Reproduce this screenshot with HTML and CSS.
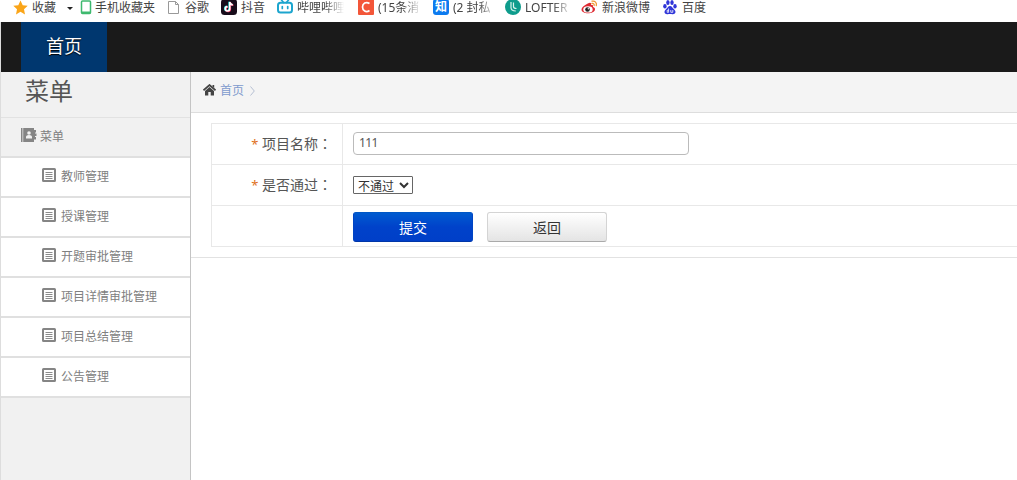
FILE: index.html
```
<!DOCTYPE html>
<html lang="zh-CN">

<head>
    <meta charset="UTF-8">
    <title>首页</title>
    <link rel="stylesheet" href="styles.css">
</head>

<body>
<svg class="defs" width="0" height="0">
    <symbol id="list" viewBox="0 0 14 14">
        <rect x="1" y="1" width="12" height="12" rx="0.5" fill="none" stroke="#858585" stroke-width="2"/>
        <path d="M3.500 4.500h7M3.500 6.500h7M3.500 8.500h7M3.500 10.500h7" stroke="#8c8c8c"/>
    </symbol>
</svg>

<div class="bookmarks">
    <div class="mark">
        <svg width="15" height="15" viewBox="0 0 15 15"><path d="M7.5 .5l2.2 4.7 5 .6-3.700 3.500 1 5.100-4.500-2.600L3 14.400l1-5.100L.3 5.800l5-.6z" fill="#faa519"/></svg>
        <span>收藏</span>
        <i class="caret"></i>
    </div>
    <div class="mark phone">
        <svg width="12" height="15" viewBox="0 0 12 15"><rect x="1.500" y="1" width="9" height="12.500" rx="1" fill="#fff" stroke="#3fb96f" stroke-width="1.500"/><path d="M2 11.500h8.500v2H2z" fill="#3fb96f"/></svg>
        <span>手机收藏夹</span>
    </div>
    <div class="mark">
        <svg width="14" height="15" viewBox="0 0 14 15"><path d="M1.500 1.500h7l3 3v9h-10zM8.500 1.500v3h3" fill="#fff" stroke="#999"/></svg>
        <span>谷歌</span>
    </div>
    <div class="mark">
        <svg width="16" height="16" viewBox="0 0 16 16"><rect width="16" height="16" rx="3.500" fill="#170b1a"/><path d="M8.700 3v6.800a2.200 2.200 0 1 1-2.200-2.200M8.700 3c.3 1.800 1.500 2.700 3.100 2.800" fill="none" stroke="#25d9d5" stroke-width="1.600" transform="translate(-.6 -.3)"/><path d="M8.700 3v6.800a2.200 2.200 0 1 1-2.200-2.200M8.700 3c.3 1.800 1.500 2.700 3.100 2.800" fill="none" stroke="#f33664" stroke-width="1.600" transform="translate(.6 .4)"/><path d="M8.700 3v6.800a2.200 2.200 0 1 1-2.200-2.200M8.700 3c.3 1.800 1.500 2.700 3.100 2.800" fill="none" stroke="#fff" stroke-width="1.600"/></svg>
        <span>抖音</span>
    </div>
    <div class="mark">
        <svg width="16" height="16" viewBox="0 0 16 16"><path d="M4.500 1l2 2.500M11.500 1l-2 2.500M5.300 7.500v2M10.700 7.500v2" stroke="#1ca5ce" stroke-width="1.700" stroke-linecap="round"/><rect x="1" y="3.800" width="14" height="9.700" rx="2.500" fill="none" stroke="#1ca5ce" stroke-width="2"/></svg>
        <span class="fade">哔哩哔哩</span>
    </div>
    <div class="mark">
        <svg width="16" height="16" viewBox="0 0 16 16"><rect width="16" height="16" rx="1" fill="#f35639"/><path d="M11.500 4.500C8 2.200 4.500 4.500 4.500 8s3.500 6 7 3.500" fill="none" stroke="#fff" stroke-width="1.700"/></svg>
        <span class="fade narrow">(15条消</span>
    </div>
    <div class="mark">
        <b class="zhi">知</b>
        <span class="fade narrow">(2 封私</span>
    </div>
    <div class="mark">
        <svg width="16" height="16" viewBox="0 0 16 16"><circle cx="8" cy="8" r="8" fill="#0e9c8c"/><path d="M6 3v5.500c0 2.500 1.500 3.500 4.800 3.500M8.500 3.500v4c0 1.500.8 2 3 2" fill="none" stroke="#d8f3ec" stroke-width="1.200"/></svg>
        <span class="fade">LOFTER</span>
    </div>
    <div class="mark">
        <svg width="17" height="16" viewBox="0 0 17 16"><path d="M10 6c.8-2.500-1-2.800-3.200-1.500C3 6.500.5 8.500.5 10.500c0 5.200 13.500 4.800 13.500-.3 0-1.500-1-2-2-2.300.5-1.700-.5-2.200-2-1.900z" fill="#de2a32"/><ellipse cx="7" cy="10.400" rx="4.700" ry="3.200" fill="#fff"/><circle cx="6.500" cy="10.500" r="2.300" fill="#222"/><circle cx="7.300" cy="9.800" r=".7" fill="#fff"/><path d="M11 2.200c3-.6 5 1.500 4.300 4.500M11 4.500c1.500-.3 2.500.6 2.100 2" fill="none" stroke="#f19732" stroke-width="1.300" stroke-linecap="round"/></svg>
        <span>新浪微博</span>
    </div>
    <div class="mark">
        <svg width="16" height="16" viewBox="0 0 16 16" fill="#3036d8"><ellipse cx="2.900" cy="7.300" rx="1.700" ry="2.300"/><ellipse cx="5.900" cy="3.600" rx="1.700" ry="2.500"/><ellipse cx="10" cy="3.600" rx="1.700" ry="2.500"/><ellipse cx="13" cy="7.300" rx="1.700" ry="2.300"/><path d="M8 7c2 0 2.500 2 4 3.300 3 2.700.9 5.500-1.700 4.900-1.600-.3-3-.3-4.600 0-2.600.6-4.700-2.200-1.700-4.900C5.500 9 6 7 8 7z"/><path d="M6.600 9.500v3.800H5.200v-2h1.400M8.800 11v2.300h2V11" fill="none" stroke="#fff" stroke-width=".8"/></svg>
        <span>百度</span>
    </div>
</div>

<div class="page">
    <div class="nav">
        <a class="nav-item">首页</a>
    </div>
    <div class="main">
        <div class="sidebar">
            <h2>菜单</h2>
            <div class="menu-title">
                <svg width="16" height="14" viewBox="0 0 16 14"><path d="M0 0h1.500v14H0zM2.200 0H13v2h2v2.500h-1v1h1.500V8H14v1h1v2.500h-2V14H2.200z" fill="#858585"/><circle cx="8" cy="5" r="1.800" fill="#f1f1f1"/><path d="M5 10.500V9c0-1.300 1.200-2 3-2s3 .7 3 2v1.500z" fill="#f1f1f1"/></svg>
                <span>菜单</span>
            </div>
            <ul class="menu">
                <li><svg width="14" height="14"><use href="#list"/></svg><span>教师管理</span></li>
                <li><svg width="14" height="14"><use href="#list"/></svg><span>授课管理</span></li>
                <li><svg width="14" height="14"><use href="#list"/></svg><span>开题审批管理</span></li>
                <li><svg width="14" height="14"><use href="#list"/></svg><span>项目详情审批管理</span></li>
                <li><svg width="14" height="14"><use href="#list"/></svg><span>项目总结管理</span></li>
                <li><svg width="14" height="14"><use href="#list"/></svg><span>公告管理</span></li>
            </ul>
        </div>
        <div class="content">
            <div class="crumb">
                <svg width="13" height="12" viewBox="0 0 13 12"><path d="M.5 6.300l6-5.300 6 5.300" fill="none" stroke="#444" stroke-width="1.700"/><path d="M2 7l4.500-4L11 7v4.500H7.700V8H5.300v3.500H2zM9.500 1h1.700v3L9.500 2.500z" fill="#444"/></svg>
                <a>首页</a>
                <svg class="arrow" width="5" height="10" viewBox="0 0 5 10"><path d="M.5 .5L4.300 5 .5 9.500" fill="none" stroke="#b5bfd2"/></svg>
            </div>
            <form class="form">
                <table>
                    <tr>
                        <td class="name"><em>*</em> 项目名称<span class="colon" lang="zh-TW">：</span></td>
                        <td><input class="text" type="text" value="111"></td>
                    </tr>
                    <tr>
                        <td class="name"><em>*</em> 是否通过<span class="colon" lang="zh-TW">：</span></td>
                        <td>
                            <select class="select">
                                <option>不通过</option>
                                <option>通过</option>
                            </select>
                        </td>
                    </tr>
                    <tr>
                        <td class="name"></td>
                        <td>
                            <div class="buttons">
                                <button type="button" class="btn blue">提交</button>
                                <button type="button" class="btn">返回</button>
                            </div>
                        </td>
                    </tr>
                </table>
            </form>
        </div>
    </div>
</div>
</body>
</html>
```

FILE: styles.css
```
* {
    box-sizing: border-box;
}
body {
    margin: 0;
    height: 480px;
    overflow: hidden;
    background: #fff;
    color: #555;
    font-family: "Noto Sans", "Noto Sans CJK SC", sans-serif;
    font-size: 12px;
}
.defs {
    display: block;
}

/* bookmarks */
.bookmarks {
    display: grid;
    grid-template-columns: 67px 87px 54px 56px 81px 75px 72px 76px 81px 60px;
    height: 22px;
    padding-left: 13px;
}
.mark {
    display: flex;
    align-items: center;
    gap: 4px;
    height: 14px;
    line-height: 14px;
    color: #444;
    white-space: nowrap;
}
.mark svg {
    flex: none;
}
.mark span {
    margin-top: 1px;
}
.phone {
    gap: 3px;
}
.caret {
    margin: 2px 0 0 7px;
    border: 3px solid transparent;
    border-top-color: #222;
    border-bottom: 0;
}
.fade {
    width: 47px;
    -webkit-mask-image: linear-gradient(to right, #000 60%, transparent);
    mask-image: linear-gradient(to right, #000 60%, transparent);
}
.narrow {
    width: 43px;
}
.zhi {
    flex: none;
    width: 16px;
    height: 16px;
    border-radius: 3px;
    background: #0d7bef;
    color: #fff;
    font-size: 12px;
    line-height: 16px;
    text-align: center;
}

/* top bar */
.page {
    border-left: 1px solid #ddd;
}
.nav {
    height: 50px;
    margin-left: -1px;
    padding-left: 21px;
    border-left: 1px solid #ddd;
    padding-left: 20px;
    background: #1a1a1a;
}
.nav-item {
    display: block;
    width: 86px;
    height: 50px;
    background: #00376f;
    color: #fff;
    font-size: 18px;
    line-height: 49px;
    text-align: center;
    text-shadow: 0 1px 1px #000;
}
.main {
    display: flex;
    height: 408px;
}

/* left menu */
.sidebar {
    width: 190px;
    border-right: 1px solid #c4c4c4;
    background: #f1f1f1;
}
.sidebar h2 {
    margin: 0;
    height: 46px;
    padding-left: 24px;
    border-bottom: 1px solid #e2e2e2;
    font-size: 24px;
    font-weight: normal;
    line-height: 38px;
}
.menu-title {
    display: flex;
    align-items: center;
    gap: 3px;
    height: 40px;
    padding-left: 20px;
    border-bottom: 2px solid #e0e0e0;
    color: #808080;
}
.menu-title svg,
.menu svg {
    margin-bottom: 4px;
}
.menu-title span,
.menu span {
    margin-bottom: 2px;
}
.menu {
    margin: 0;
    padding: 0;
    list-style: none;
}
.menu li {
    display: flex;
    align-items: center;
    gap: 5px;
    height: 40px;
    padding-left: 41px;
    border-bottom: 2px solid #e0e0e0;
    background: #fff;
    color: #808080;
}

/* right part */
.content {
    flex: 1;
}
.crumb {
    display: flex;
    align-items: center;
    height: 41px;
    padding: 0 0 4px 12px;
    border-bottom: 1px solid #ddd;
    background: #f4f4f4;
}
.crumb a {
    margin-left: 4px;
    color: #819bcd;
}
.arrow {
    margin: 2px 0 0 6px;
}
.form {
    padding: 10px 0 10px 20px;
    border-bottom: 1px solid #e2e2e2;
}
table {
    width: 100%;
    border-collapse: collapse;
}
td {
    height: 41px;
    padding: 0 0 0 10px;
    border: 1px solid #e8e8e8;
    border-right: 0;
}
.name {
    width: 131px;
    padding: 0 10px 2px 0;
    font-size: 14px;
    text-align: right;
}
.name em {
    color: #e0701c;
    font-size: 13px;
    font-style: normal;
}
.colon {
    font-family: "Noto Sans CJK TC", sans-serif;
    line-height: 1;
}
.text {
    display: block;
    width: 336px;
    height: 23px;
    margin-bottom: 2px;
    padding: 0 5px 2px;
    border: 1px solid #bbb;
    border-radius: 4px;
    color: #555;
    font-family: inherit;
    font-size: 12px;
    letter-spacing: -0.6px;
}
.select {
    display: block;
    width: 60px;
    height: 18px;
    padding: 0;
    border: 1px solid #666;
    border-radius: 1px;
    background: #fff;
    color: #333;
    font-family: inherit;
    font-size: 12px;
}
.buttons {
    display: flex;
    gap: 14px;
    margin-top: 2px;
}
.btn {
    width: 120px;
    height: 30px;
    padding: 0;
    border: 1px solid #d4d4d4;
    border-bottom-color: #aaa;
    border-radius: 3px;
    background: linear-gradient(#fff, #e4e4e4);
    color: #333;
    font-family: inherit;
    font-size: 14px;
}
.blue {
    border-color: #0057c6 #0044c4 #0036a8;
    background: linear-gradient(#005bd0, #0042ca 50%, #003fc8);
    color: #fff;
}
```
